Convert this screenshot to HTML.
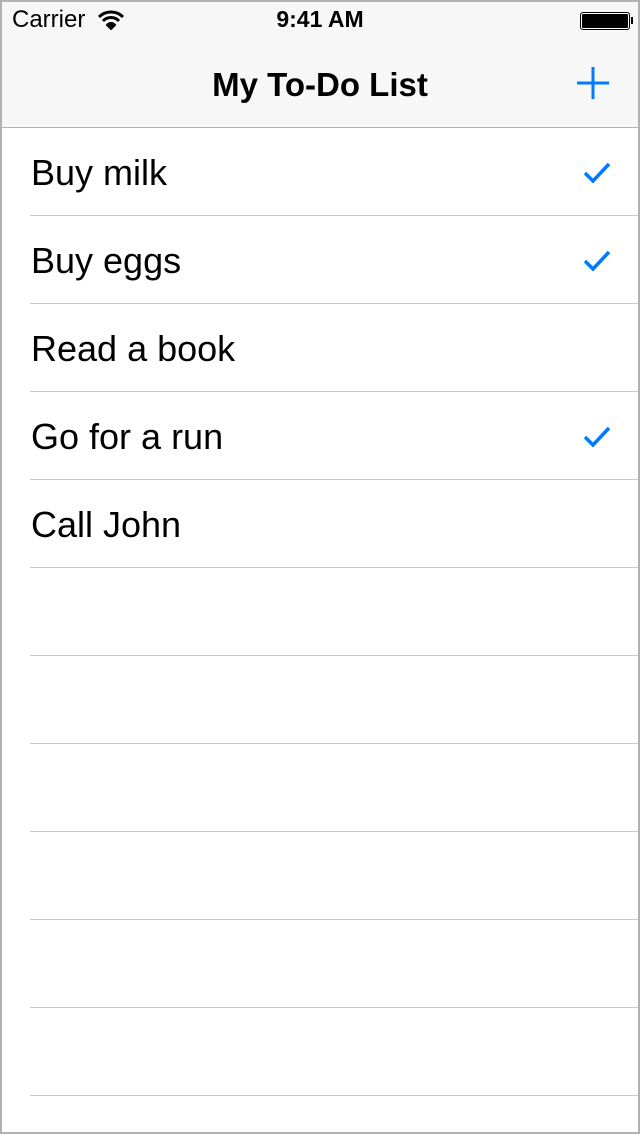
<!DOCTYPE html>
<html><head><style>
body{margin:0;width:640px;height:1136px;overflow:hidden;font-family:"Liberation Sans",sans-serif;background:#fff;position:relative}
.frame{position:absolute;left:0;top:0;width:636px;height:1132px;border:2px solid #b2b2b2;border-top:none;border-bottom:2px solid #b2b2b2}
.nav{position:absolute;left:0;top:0;width:640px;height:128px;background:#f7f7f7;border-bottom:1px solid #b2b2b2;border-top:2px solid #b2b2b2;box-sizing:border-box}
.t{position:absolute;white-space:nowrap}
.row{position:absolute;left:30px;width:608px;height:88px;border-bottom:1px solid #c8c7cc;box-sizing:border-box}
.row span{position:absolute;left:1px;top:24px;font-size:36px;color:#000}
.row svg{position:absolute;left:552px;top:32px}
</style></head><body>
<div class="nav"></div>
<div class="frame"></div>
<div class="t" style="left:12px;top:6px;font-size:24px">Carrier</div>
<svg style="position:absolute;left:98px;top:10px" width="26" height="20" viewBox="0 0 26 20"><path d="M1 7 A17 17 0 0 1 25 7" stroke="#000" stroke-width="3" fill="none"/><path d="M5 11 A11 11 0 0 1 21 11" stroke="#000" stroke-width="3" fill="none"/><path d="M9 15 A5 5 0 0 1 17 15 L13 19Z" fill="#000" stroke="#000" stroke-width="2"/></svg>
<div class="t" style="left:0;width:640px;text-align:center;top:6px;font-size:23px;font-weight:bold">9:41 AM</div>
<div style="position:absolute;left:580px;top:12px;width:48px;height:16px;border:1px solid #000;border-radius:3px;background:#000;box-shadow:inset 0 0 0 1px #fff"></div>
<div style="position:absolute;left:631px;top:17px;width:2px;height:7px;background:#000"></div>
<div class="t" style="left:0;width:640px;text-align:center;top:66px;font-size:33px;font-weight:bold">My To-Do List</div>
<svg style="position:absolute;left:576px;top:66px" width="34" height="34"><path d="M17 1V33M1 17H33" stroke="#007aff" stroke-width="3"/></svg>
<div class="row" style="top:128px"><span>Buy milk</span><svg width="30" height="26"><path d="M3 13L11 21L27 4" stroke="#007aff" stroke-width="3.5" fill="none"/></svg></div>
<div class="row" style="top:216px"><span>Buy eggs</span><svg width="30" height="26"><path d="M3 13L11 21L27 4" stroke="#007aff" stroke-width="3.5" fill="none"/></svg></div>
<div class="row" style="top:304px"><span>Read a book</span></div>
<div class="row" style="top:392px"><span>Go for a run</span><svg width="30" height="26"><path d="M3 13L11 21L27 4" stroke="#007aff" stroke-width="3.5" fill="none"/></svg></div>
<div class="row" style="top:480px"><span>Call John</span></div>
<div class="row" style="top:568px"></div>
<div class="row" style="top:656px"></div>
<div class="row" style="top:744px"></div>
<div class="row" style="top:832px"></div>
<div class="row" style="top:920px"></div>
<div class="row" style="top:1008px"></div>
</body></html>
